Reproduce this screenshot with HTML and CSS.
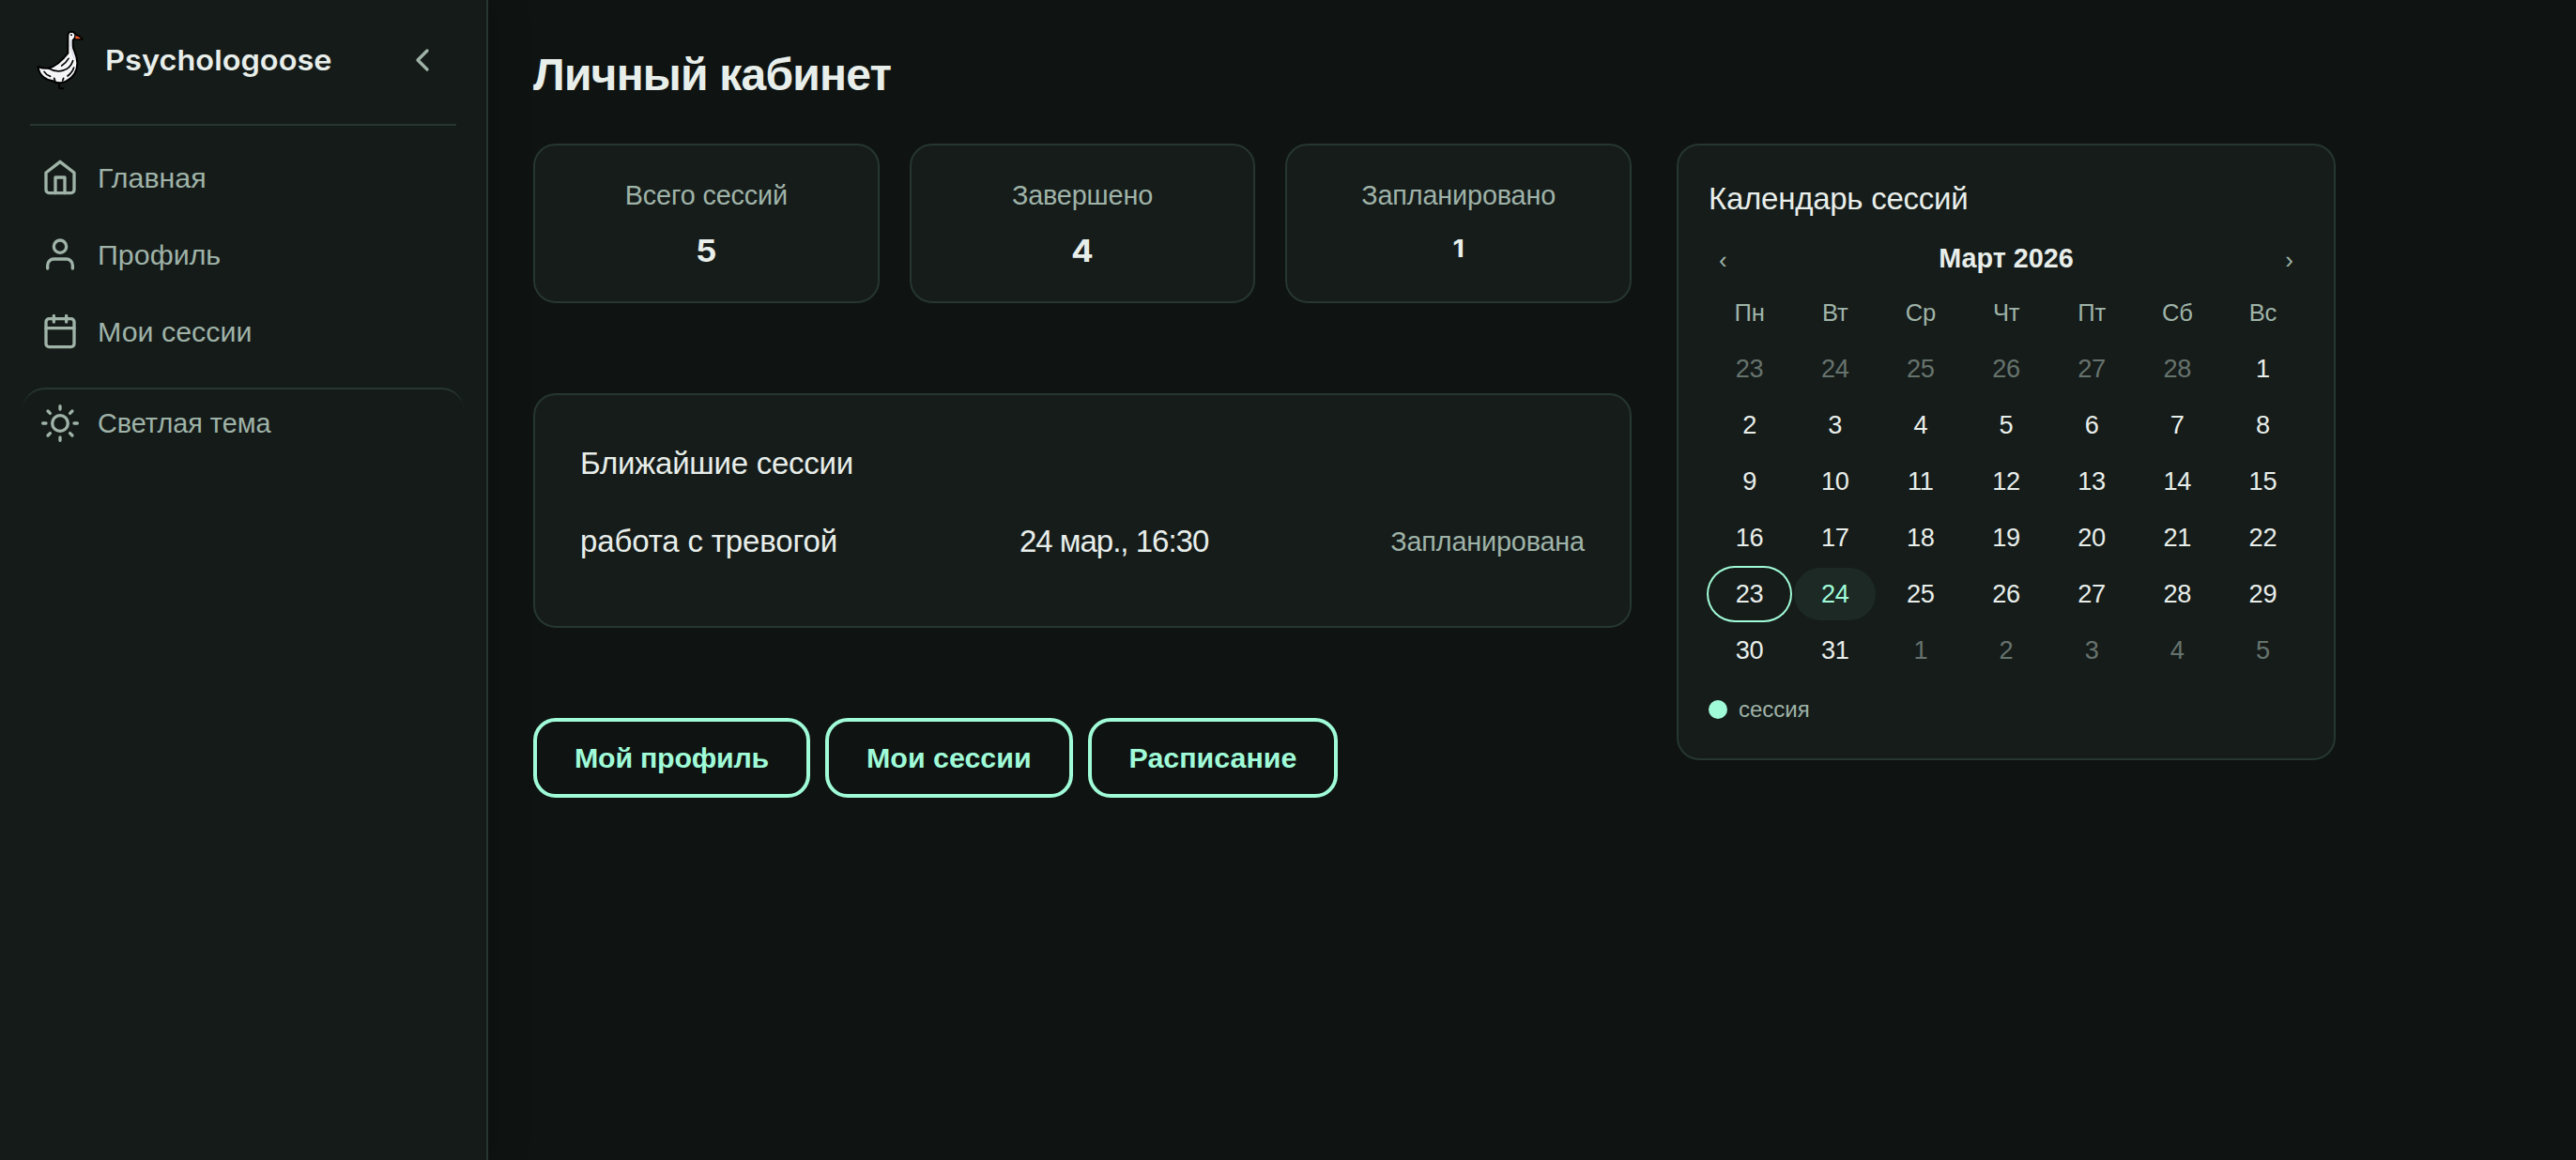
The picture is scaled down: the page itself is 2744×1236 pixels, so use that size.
FILE: index.html
```html
<!DOCTYPE html>
<html lang="ru">
  <head>
    <meta charset="utf-8">
    <title>Личный кабинет</title>
    <link rel="stylesheet" href="styles.css">
    <meta name="viewport" content="width=device-width, initial-scale=1" />
  </head>
  <body>
    <aside class="sidebar">
      <div class="brand">
        <svg class="goose" viewBox="36 36 192 192">
          <path class="leg" d="M129 204V220Q129 223 133 223H142" />
          <path class="beak" d="M178 50Q192 53 202 65H178Z" />
          <path class="bird" d="M157 60Q156 41 168 41Q181 42 181 54Q181 62 173 69V88C174 100 187 114 187 142C187 172 170 190 152 199Q142 205 129 205Q118 205 110 199C88 196 64 182 62 153Q78 160 95 158C120 152 140 132 157 110Z" />
          <path class="neck" d="M166 70C164 95 172 112 178 125" />
          <path class="bill" d="M181 54Q192 57 199 64H181Z" />
          <circle class="eye" cx="168" cy="52" r="3" />
          <path class="line" d="M159 127Q150 142 137 150M173 134C162 168 125 176 95 158M176 156Q171 172 156 183M81 169Q88 180 101 184M113 190L116 198M143 190L140 198" />
        </svg>
        <span class="name">Psychologoose</span>
        <svg class="icon" viewBox="0 0 24 24"><polyline points="15 18 9 12 15 6" /></svg>
      </div>
      <nav class="nav">
        <a class="item">
          <svg class="icon" viewBox="0 0 24 24"><path d="M3 9l9-7 9 7v11a2 2 0 0 1-2 2H5a2 2 0 0 1-2-2z" /><polyline points="9 22 9 12 15 12 15 22" /></svg>
          <span>Главная</span>
        </a>
        <a class="item">
          <svg class="icon" viewBox="0 0 24 24"><path d="M20 21v-2a4 4 0 0 0-4-4H8a4 4 0 0 0-4 4v2" /><circle cx="12" cy="7" r="4" /></svg>
          <span>Профиль</span>
        </a>
        <a class="item">
          <svg class="icon" viewBox="0 0 24 24"><rect x="3" y="4" width="18" height="18" rx="2" /><path d="M16 2v4M8 2v4M3 10h18" /></svg>
          <span>Мои сессии</span>
        </a>
        <a class="item theme">
          <svg class="icon" viewBox="0 0 24 24"><circle cx="12" cy="12" r="5" /><path d="M12 1v2M12 21v2M4.22 4.22l1.42 1.42M18.36 18.36l1.42 1.42M1 12h2M21 12h2M4.22 19.78l1.42-1.42M18.36 5.64l1.42-1.42" /></svg>
          <span>Светлая тема</span>
        </a>
      </nav>
    </aside>
    <main class="content">
      <h1 class="title">Личный кабинет</h1>
      <div class="columns">
        <div class="left">
          <div class="stats">
            <div class="card stat"><span class="label">Всего сессий</span><b class="value">5</b></div>
            <div class="card stat"><span class="label">Завершено</span><b class="value">4</b></div>
            <div class="card stat"><span class="label">Запланировано</span><b class="value one">1</b></div>
          </div>
          <section class="card upcoming">
            <h2 class="heading">Ближайшие сессии</h2>
            <div class="session">
              <span>работа с тревогой</span>
              <span class="date">24 мар., 16:30</span>
              <span class="status">Запланирована</span>
            </div>
          </section>
          <div class="actions">
            <a class="button">Мой профиль</a>
            <a class="button">Мои сессии</a>
            <a class="button">Расписание</a>
          </div>
        </div>
        <section class="card calendar">
          <h2 class="heading">Календарь сессий</h2>
          <div class="month">
            <span class="arrow">‹</span>
            <b>Март 2026</b>
            <span class="arrow">›</span>
          </div>
          <div class="week">
            <span>Пн</span><span>Вт</span><span>Ср</span><span>Чт</span><span>Пт</span><span>Сб</span><span>Вс</span>
          </div>
          <div class="days">
            <span class="out">23</span><span class="out">24</span><span class="out">25</span><span class="out">26</span><span class="out">27</span><span class="out">28</span><span>1</span>
            <span>2</span><span>3</span><span>4</span><span>5</span><span>6</span><span>7</span><span>8</span>
            <span>9</span><span>10</span><span>11</span><span>12</span><span>13</span><span>14</span><span>15</span>
            <span>16</span><span>17</span><span>18</span><span>19</span><span>20</span><span>21</span><span>22</span>
            <span class="today">23</span><span class="busy">24</span><span>25</span><span>26</span><span>27</span><span>28</span><span>29</span>
            <span>30</span><span>31</span><span class="out">1</span><span class="out">2</span><span class="out">3</span><span class="out">4</span><span class="out">5</span>
          </div>
          <div class="legend"><i class="dot"></i><span>сессия</span></div>
        </section>
      </div>
    </main>
  </body>
</html>
```
FILE: styles.css
```css
* {box-sizing: border-box;}
body {margin: 0; display: flex; min-height: 100vh; background-color: #0f1412; color: #e8eeea; font-family: "Liberation Sans", Arial, sans-serif; font-size: 32px; line-height: 40px;}

.sidebar {flex: none; width: 520px; border-right: 2px solid #263632; background-color: #151b19; box-shadow: 0 0 40px rgba(0, 0, 0, 0.25);}
.brand {display: flex; align-items: center; height: 134px; margin: 0 32px; padding: 32px 16px 36px 0; border-bottom: 2px solid #263632;}
.goose {flex: none; width: 64px; height: 64px; overflow: visible; stroke-linecap: round; stroke-linejoin: round;}
.leg {fill: none; stroke: #000; stroke-width: 6;}
.beak {fill: #000; stroke: #000; stroke-width: 7;}
.bird {fill: #f4f5f7; stroke: #000; stroke-width: 6;}
.neck {fill: none; stroke: #d9dde8; stroke-width: 5;}
.bill {fill: #f0592a;}
.eye {fill: #000;}
.line {fill: none; stroke: #000; stroke-width: 5;}
.name {margin: 0 auto 0 16px; font-family: Inter, sans-serif; font-size: 30px; font-weight: 600; transform: scaleX(1.085); transform-origin: left;}
.icon {flex: none; width: 40px; height: 40px; fill: none; stroke: #9fb3a8; stroke-width: 2; stroke-linecap: round; stroke-linejoin: round;}

.nav {padding: 14px 24px;}
.item {display: flex; align-items: center; gap: 20px; height: 82px; padding: 0 20px; color: #9fb3a8; font-size: 30.4px;}
.theme {height: 74px; margin-top: 19px; border-top: 2px solid #263632; border-radius: 24px; font-size: 28.8px;}

.content {flex: 1; padding: 56px 48px;}
.title {margin: 0 0 49px; font-size: 48px; line-height: 48px; letter-spacing: -0.8px;}
.columns {display: grid; grid-template-columns: 5fr 3fr; align-items: start; gap: 48px; width: 1920px;}
.card {border: 2px solid #263632; border-radius: 24px; background-color: #161c1a;}
.heading {margin: 0; font-size: 33px; font-weight: 400; letter-spacing: -0.25px;}

.stats {display: grid; grid-template-columns: repeat(3, 1fr); gap: 32px;}
.stat {display: flex; flex-direction: column; align-items: center; height: 170px; padding-top: 33px;}
.label {color: #9fb3a8; font-size: 28.8px; letter-spacing: -0.15px;}
.value {margin-top: 20px; font-family: Inter, sans-serif; font-size: 32px; transform: scaleX(1.1);}
.one {font-size: 26px; line-height: 33px;}

.upcoming {height: 250px; margin-top: 96px; padding: 53px 48px;}
.session {display: flex; justify-content: space-between; margin-top: 43px; font-size: 33px; letter-spacing: -0.15px;}
.date {letter-spacing: -1px;}
.status {color: #9fb3a8; font-size: 28.8px;}

.actions {display: flex; gap: 16px; margin-top: 96px;}
.button {height: 85px; padding: 18px 40px; border: 4px solid #a0fbd8; border-radius: 24px; color: #a0fbd8; font-size: 30.4px; font-weight: 700;}
.button:first-child {letter-spacing: -0.25px;}

.calendar {height: 657px; padding: 37px 32px;}
.month {display: flex; justify-content: space-between; margin-top: 23px; padding: 0 11px; font-size: 28.8px;}
.arrow {color: #9fb3a8; font-size: 26px; line-height: 44px; height: 40px;}
.week, .days {display: grid; grid-template-columns: repeat(7, 1fr); gap: 4px; text-align: center;}
.week {margin-top: 18px; color: #9fb3a8; font-size: 25.6px; letter-spacing: -0.3px;}
.days {margin-top: 12px; font-size: 27.2px; line-height: 56px; letter-spacing: -0.3px;}
.out {color: #66736d;}
.today {border-radius: 28px; box-shadow: 0 0 0 2px #a0fbd8;}
.busy {border-radius: 28px; background-color: #1c2925; color: #a0fbd8;}
.legend {display: flex; align-items: center; gap: 12px; margin-top: 15px; color: #9fb3a8; font-size: 24px;}
.dot {width: 20px; height: 20px; border-radius: 50%; background-color: #a0fbd8;}
```
